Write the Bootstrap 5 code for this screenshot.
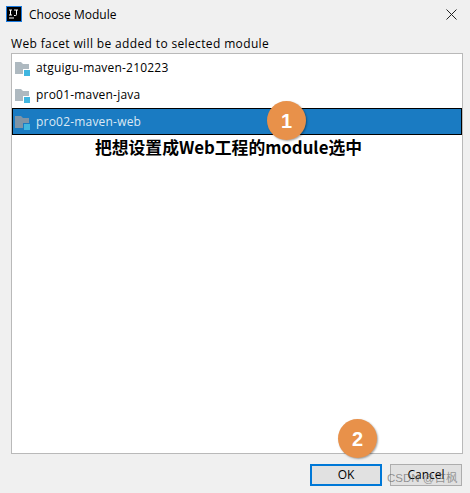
<!DOCTYPE html>
<html lang="en">
<head>
    <meta charset="UTF-8">
    <meta name="viewport" content="width=device-width, initial-scale=1.0">
    <title>Choose Module</title>
    <link href="https://cdn.jsdelivr.net/npm/bootstrap@5.3.3/dist/css/bootstrap.min.css" rel="stylesheet">
    <script defer src="https://cdn.jsdelivr.net/npm/bootstrap@5.3.3/dist/js/bootstrap.bundle.min.js"></script>
    <style>
        html, body { height: 100%; }
        body {
            background-color: #f0f0f0;
            color: #000;
            font-family: "Open Sans", "Noto Sans", sans-serif;
            font-size: 12px;
            line-height: 16px;
            overflow: hidden;
        }
        .dialog { width: 470px; height: 493px; position: relative; }
        .title-bar { height: 30px; padding: 0 13px 0 6px; }
        .app-logo { width: 16px; height: 16px; margin: -2px 7px 0 0; }
        .close-x { width: 11px; height: 11px; margin-top: -2px; }
        .dlg-body { padding: 6px 7px 0 11px; }
        .hint { height: 17px; letter-spacing: .36px; }
        .module-list {
            height: 401px;
            background: #fff;
            border: 1px solid #b9b9b9;
        }
        .module-row {
            height: 27px;
            padding-left: 3px;
            gap: 5px;
            letter-spacing: .2px;
        }
        .module-row.picked {
            background: #1a7bc2;
            color: #dce9f4;
            outline: 1px solid #000;
            outline-offset: -1px;
        }
        .folder-icon { width: 16px; height: 16px; margin-top: 3px; }
        .caption {
            font-family: "Noto Sans CJK SC", sans-serif;
            font-size: 16.8px;
            font-weight: 700;
            line-height: 24px;
            padding-left: 83px;
            white-space: nowrap;
        }
        .foot { padding: 10px 1px 0 0; gap: 8px; }
        .dlg-btn {
            width: 72px;
            height: 22px;
            padding: 0;
            border-radius: 0;
            font-size: 12px;
            line-height: 16px;
            color: #000;
            background: #e1e1e1;
            border: 1px solid #adadad;
        }
        .dlg-btn.main { border: 2px solid #0078d7; }
        .step-dot {
            position: absolute;
            width: 39px;
            height: 39px;
            border-radius: 50%;
            background: #e8914a;
            color: #fff;
            font-family: "Liberation Sans", sans-serif;
            font-size: 20px;
            font-weight: 700;
            box-shadow: 1px 1px 2px rgba(0, 0, 0, .35);
        }
        .step-one { left: 267px; top: 101px; }
        .step-two { left: 338px; top: 419px; }
        .watermark {
            position: absolute;
            left: 387px;
            top: 470px;
            color: rgba(90, 90, 90, .6);
            font-family: "Liberation Sans", "Noto Sans CJK SC", sans-serif;
            font-size: 11.5px;
            white-space: nowrap;
        }
    </style>
</head>
<body>
    <div class="dialog">
        <div class="title-bar d-flex align-items-center">
            <svg class="app-logo" viewBox="0 0 16 16">
                <rect x=".5" y=".5" width="15" height="15" fill="#000" stroke="#1a7ae0"/>
                <path d="M3 4h3M4.500 4v5M3 9h3M8 4h4M10.500 4v4.500q0 1-1 1H8M3 12h5" fill="none" stroke="#fff" stroke-width="1"/>
            </svg>
            <span class="flex-grow-1">Choose Module</span>
            <svg class="close-x" viewBox="0 0 11 11">
                <path d="M.5.500l10 10M10.500.500l-10 10" stroke="#222" stroke-width="1"/>
            </svg>
        </div>
        <div class="dlg-body">
            <div class="hint">Web facet will be added to selected module</div>
            <div class="module-list">
                <div class="module-row d-flex align-items-center">
                    <svg class="folder-icon" viewBox="0 0 16 16">
                        <path d="M0 1h6l2 2h6v10H0z" fill="#aeb9c0"/>
                        <rect x="8" y="8" width="7" height="7" fill="#fff"/>
                        <rect x="9" y="9" width="6" height="6" fill="#40b6e0"/>
                    </svg>
                    <span>atguigu-maven-210223</span>
                </div>
                <div class="module-row d-flex align-items-center">
                    <svg class="folder-icon" viewBox="0 0 16 16">
                        <path d="M0 1h6l2 2h6v10H0z" fill="#aeb9c0"/>
                        <rect x="8" y="8" width="7" height="7" fill="#fff"/>
                        <rect x="9" y="9" width="6" height="6" fill="#40b6e0"/>
                    </svg>
                    <span>pro01-maven-java</span>
                </div>
                <div class="module-row picked d-flex align-items-center">
                    <svg class="folder-icon" viewBox="0 0 16 16">
                        <path d="M0 1h6l2 2h6v10H0z" fill="#7f94a6"/>
                        <rect x="8" y="8" width="7" height="7" fill="#1a7bc2"/>
                        <rect x="9" y="9" width="6" height="6" fill="#40b6e0"/>
                    </svg>
                    <span>pro02-maven-web</span>
                </div>
                <div class="caption">把想设置成Web工程的module选中</div>
            </div>
            <div class="foot d-flex justify-content-end">
                <button class="btn dlg-btn main" type="button">OK</button>
                <button class="btn dlg-btn" type="button">Cancel</button>
            </div>
        </div>
        <div class="step-dot step-one d-flex align-items-center justify-content-center">1</div>
        <div class="step-dot step-two d-flex align-items-center justify-content-center">2</div>
        <div class="watermark">CSDN @古枫</div>
    </div>
</body>
</html>
